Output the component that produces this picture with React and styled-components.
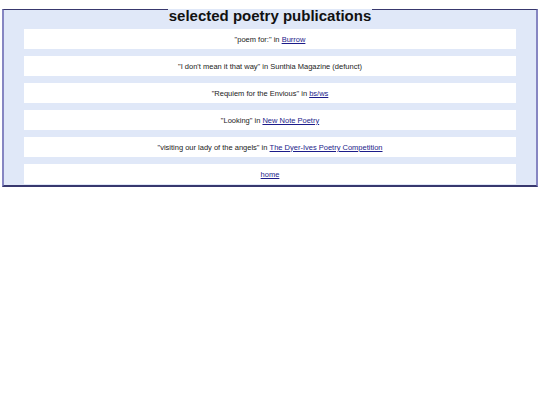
import React from 'react'
import styled, { createGlobalStyle } from 'styled-components'

const GlobalStyle = createGlobalStyle`
  body {
    margin: 0;
    background: #ffffff;
    font-family: "Liberation Sans", Arial, sans-serif;
  }
`

const Frame = styled.fieldset`
  margin: 0 2px;
  padding: 10px 20px 1px;
  background: #e0e8f8;
  border-style: solid;
  border-width: 1px 2px 2px;
  border-color: #38386e #8686c2;
  min-width: 0;
`

const Title = styled.legend`
  margin: 0 auto;
  padding: 12px 1px 0;
  font-size: 15px;
  line-height: 7px;
  font-weight: bold;
  color: #111111;
`

const List = styled.div`
  display: flex;
  flex-direction: column;
  gap: 7px;
`

const Entry = styled.div`
  height: 20px;
  background: #ffffff;
  display: flex;
  align-items: center;
  justify-content: center;
  font-size: 7.5px;
  color: #222222;
  white-space: pre;
`

const Link = styled.a`
  color: #1c1c8a;
  text-decoration: underline;
`

const entries = [
  { title: '"poem for:"', venue: 'Burrow', linked: true },
  { title: '"I don\'t mean it that way"', venue: 'Sunthia Magazine (defunct)', linked: false },
  { title: '"Requiem for the Envious"', venue: 'bs/ws', linked: true },
  { title: '"Looking"', venue: 'New Note Poetry', linked: true },
  { title: '"visiting our lady of the angels"', venue: 'The Dyer-Ives Poetry Competition', linked: true },
]

const App = () => {
  return (
    <>
      <GlobalStyle />
      <Frame>
        <Title>selected poetry publications</Title>
        <List>
          {entries.map((e) => (
            <Entry key={e.title}>
              {e.title} in {e.linked ? <Link href="#">{e.venue}</Link> : e.venue}
            </Entry>
          ))}
          <Entry>
            <Link href="#">home</Link>
          </Entry>
        </List>
      </Frame>
    </>
  )
}

export default App
